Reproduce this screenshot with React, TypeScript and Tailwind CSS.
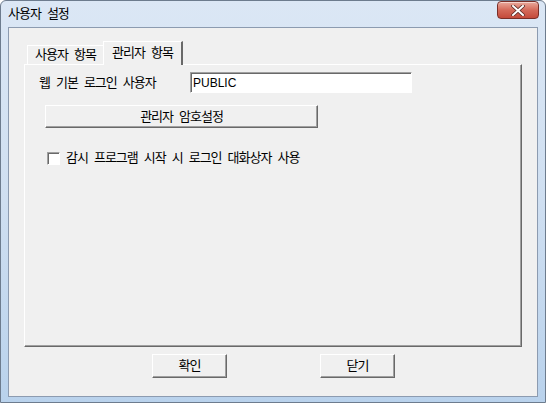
import * as React from 'react'

const FONT = { fontFamily: '"Liberation Sans", "Noto Sans CJK KR", sans-serif' }

/* classic 3D button */
const ClassicButton = ({ label, className }: { label: string; className?: string }) => (
    <button
        type="button"
        className={
            'flex items-center justify-center bg-[#f0f0f0] text-[13px] leading-[14px] tracking-[-1px] [word-spacing:3.4px] text-black border border-t-white border-l-white border-r-[#696969] border-b-[#696969] shadow-[inset_-1px_-1px_0_#a0a0a0] ' +
            (className ?? '')
        }
    >
        {label}
    </button>
)

const CloseButton = () => (
    <div className="flex h-[18px] w-[42px] items-center justify-center rounded-[4px] border border-[#7a2f28] bg-gradient-to-b from-[#e9a99c] via-[#d46a5a] to-[#c44a3b] shadow-[inset_0_1px_0_rgba(255,255,255,0.5)]">
        <svg width="14" height="11" viewBox="0 0 14 11">
            <path d="M2 1 L12 10 M12 1 L2 10" stroke="#5b2a25" strokeWidth="3.6" strokeLinecap="square" />
            <path d="M2 1 L12 10 M12 1 L2 10" stroke="#ffffff" strokeWidth="2" strokeLinecap="square" />
        </svg>
    </div>
)

export default function App() {
    return (
        <div
            style={FONT}
            className="flex h-[403px] w-[546px] flex-col overflow-hidden rounded-t-[6px] border border-[#6d7c8e] bg-gradient-to-b from-[#dbe7f5] via-[#cfdff1] to-[#b9d2ec] text-[13px] leading-[14px] tracking-[-1px] [word-spacing:3.4px] text-black"
        >
            {/* title bar */}
            <div className="flex h-[26px] items-start pl-[7px] pr-[6px]">
                <span className="mt-[6px]">사용자 설정</span>
                <div className="ml-auto">
                    <CloseButton />
                </div>
            </div>

            {/* client area */}
            <div className="mx-[7px] mb-[5px] flex flex-1 flex-col border border-[#8c9bb0] bg-[#f0f0f0] pl-[15px] pt-[13px]">
                {/* tabs */}
                <div className="flex h-[23px] items-end pl-[3px]">
                    <div className="flex h-[19px] w-[76px] items-center justify-center border-l border-t border-white">
                        사용자 항목
                    </div>
                    <div className="relative z-10 -mb-px flex h-[24px] w-[80px] items-start justify-center border-l border-t border-r-2 border-white border-r-[#696969] bg-[#f0f0f0] pt-[4px]">
                        관리자 항목
                    </div>
                </div>

                {/* tab panel */}
                <div className="flex h-[283px] w-[498px] flex-col border border-t-white border-l-white border-r-[#696969] border-b-[#696969] shadow-[inset_-1px_-1px_0_#a0a0a0] pl-[14px] pt-[7px]">
                    <div className="flex h-[21px] items-center">
                        <span className="w-[151px]">웹 기본 로그인 사용자</span>
                        <div className="flex h-[21px] w-[222px] items-center border border-t-[#a0a0a0] border-l-[#a0a0a0] border-r-white border-b-white bg-white pl-[2px] text-[12px] tracking-normal shadow-[inset_1px_1px_0_#696969]">
                            PUBLIC
                        </div>
                    </div>

                    <ClassicButton label="관리자 암호설정" className="mt-[12px] ml-[6px] h-[23px] w-[273px]" />

                    <label className="mt-[23px] ml-[8px] flex items-center gap-[6px]">
                        <span className="h-[13px] w-[13px] border border-t-[#a0a0a0] border-l-[#a0a0a0] border-r-white border-b-white bg-white shadow-[inset_1px_1px_0_#696969]" />
                        감시 프로그램 시작 시 로그인 대화상자 사용
                    </label>
                </div>

                {/* dialog buttons */}
                <div className="mt-[7px] flex pl-[128px]">
                    <ClassicButton label="확인" className="h-[24px] w-[75px]" />
                    <ClassicButton label="닫기" className="ml-[93px] h-[24px] w-[75px]" />
                </div>
            </div>
        </div>
    )
}
